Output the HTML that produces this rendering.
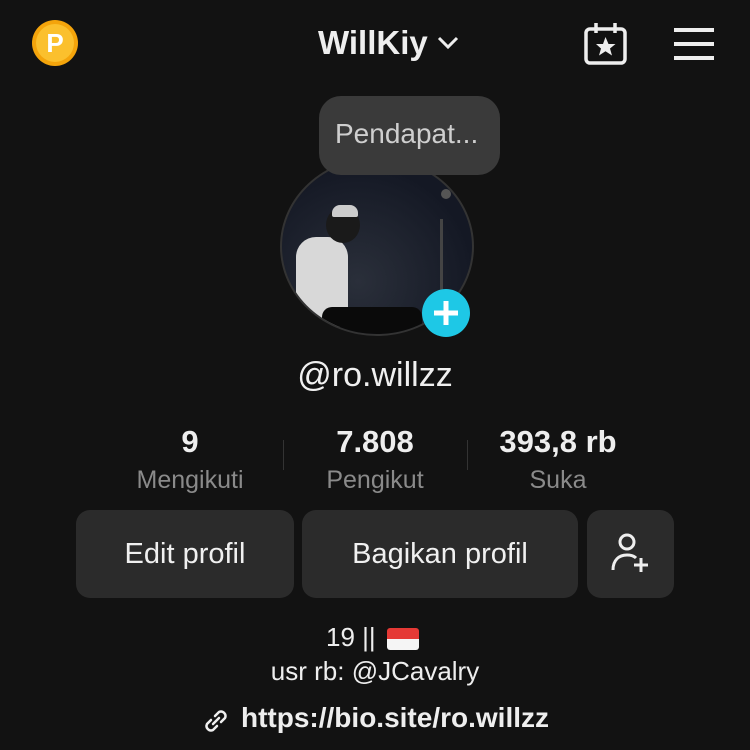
<!DOCTYPE html>
<html><head><style>
body{margin:0;width:750px;height:750px;background:#121212;font-family:"Liberation Sans",sans-serif;color:#eee;position:relative;overflow:hidden}
.a{position:absolute}
.c{text-align:center}
.btn{position:absolute;top:510px;height:88px;background:#2b2b2b;border-radius:14px;font-size:29px;color:#f0f0f0;display:flex;align-items:center;justify-content:center}
</style></head><body>
<div class="a" style="left:32px;top:20px;width:46px;height:46px;border-radius:50%;background:#f4a40b;"><div class="a" style="left:4px;top:4px;width:38px;height:38px;border-radius:50%;background:#fbc02d;color:#fff;font-weight:bold;font-size:26px;text-align:center;line-height:38px">P</div></div>
<div class="a" style="left:318px;top:24px;font-size:33px;font-weight:bold;color:#eee">WillKiy</div>
<svg class="a" style="left:436px;top:34px" width="24" height="18"><path d="M3 4l9 9 9-9" stroke="#eee" stroke-width="3" fill="none"/></svg>
<svg class="a" style="left:582px;top:20px" width="48" height="46"><rect x="4" y="9" width="39" height="34" rx="4" stroke="#eee" stroke-width="3.5" fill="none"/><path d="M14 3v10M33 3v10" stroke="#eee" stroke-width="3.5"/><path d="M23.5 17l3 7h7l-5.5 4.5 2 7-6.5-4.2-6.5 4.2 2-7L14 24h7z" fill="#eee"/></svg>
<svg class="a" style="left:672px;top:26px" width="44" height="36"><path d="M2 4h40M2 18h40M2 32h40" stroke="#eee" stroke-width="4"/></svg>
<div class="a" style="left:280px;top:157px;width:190px;height:175px;border-radius:50%;overflow:hidden;background:radial-gradient(circle at 40% 70%,#2a2f3a,#141824 70%);border:2px solid #333">
<div class="a" style="left:14px;top:78px;width:52px;height:90px;background:#d8d8d8;border-radius:20px 20px 4px 4px"></div>
<div class="a" style="left:44px;top:48px;width:34px;height:36px;background:#1a1a1a;border-radius:50%"></div>
<div class="a" style="left:50px;top:46px;width:26px;height:12px;background:#ccc;border-radius:8px 8px 2px 2px"></div>
<div class="a" style="left:40px;top:148px;width:100px;height:30px;background:#0a0a0a;border-radius:10px"></div>
<div class="a" style="left:158px;top:60px;width:3px;height:90px;background:#444"></div>
</div>
<div class="a" style="left:319px;top:96px;width:181px;height:79px;border-radius:22px;background:#3a3a3a"></div>
<div class="a" style="left:335px;top:118px;font-size:28px;color:#cfcfcf">Pendapat...</div>
<div class="a" style="left:441px;top:189px;width:10px;height:10px;border-radius:50%;background:#555"></div>
<div class="a" style="left:422px;top:289px;width:48px;height:48px;border-radius:50%;background:#1ec8e6"></div>
<svg class="a" style="left:422px;top:289px" width="48" height="48"><path d="M24 12v24M12 24h24" stroke="#fff" stroke-width="5"/></svg>
<div class="a c" style="left:0;width:750px;top:356px;font-size:34px;color:#f0f0f0">@ro.willzz</div>
<div class="a c" style="left:90px;width:200px;top:424px;font-size:31px;font-weight:bold">9</div>
<div class="a c" style="left:90px;width:200px;top:466px;font-size:25px;color:#8a8a8a">Mengikuti</div>
<div class="a c" style="left:275px;width:200px;top:424px;font-size:31px;font-weight:bold">7.808</div>
<div class="a c" style="left:275px;width:200px;top:466px;font-size:25px;color:#8a8a8a">Pengikut</div>
<div class="a c" style="left:458px;width:200px;top:424px;font-size:31px;font-weight:bold">393,8 rb</div>
<div class="a c" style="left:458px;width:200px;top:466px;font-size:25px;color:#8a8a8a">Suka</div>
<div class="a" style="left:283px;top:440px;width:1px;height:30px;background:#333"></div>
<div class="a" style="left:467px;top:440px;width:1px;height:30px;background:#333"></div>
<div class="btn" style="left:76px;width:218px">Edit profil</div>
<div class="btn" style="left:302px;width:276px">Bagikan profil</div>
<div class="btn" style="left:587px;width:87px"><svg width="44" height="44"><circle cx="18" cy="10" r="7" stroke="#eee" stroke-width="3" fill="none"/><path d="M4 38c0-10 6-15 14-15 4 0 7 1 9 3" stroke="#eee" stroke-width="3" fill="none"/><path d="M32 26v14M25 33h14" stroke="#eee" stroke-width="3"/></svg></div>
<div class="a" style="left:326px;top:622px;font-size:26px">19 ||</div>
<div class="a" style="left:387px;top:628px;width:32px;height:11px;background:#e53935;border-radius:3px 3px 0 0"></div>
<div class="a" style="left:387px;top:639px;width:32px;height:11px;background:#f5f5f5;border-radius:0 0 3px 3px"></div>
<div class="a c" style="left:0;width:750px;top:656px;font-size:26px">usr rb: @JCavalry</div>
<svg class="a" style="left:200px;top:705px" width="32" height="32"><path d="M13 19l6-6M11 15l-4 4a4.5 4.5 0 006 6l4-4M21 17l4-4a4.5 4.5 0 00-6-6l-4 4" stroke="#eee" stroke-width="2.5" fill="none" stroke-linecap="round"/></svg>
<div class="a" style="left:241px;top:702px;font-size:28px;font-weight:bold">https://bio.site/ro.willzz</div>
</body></html>
